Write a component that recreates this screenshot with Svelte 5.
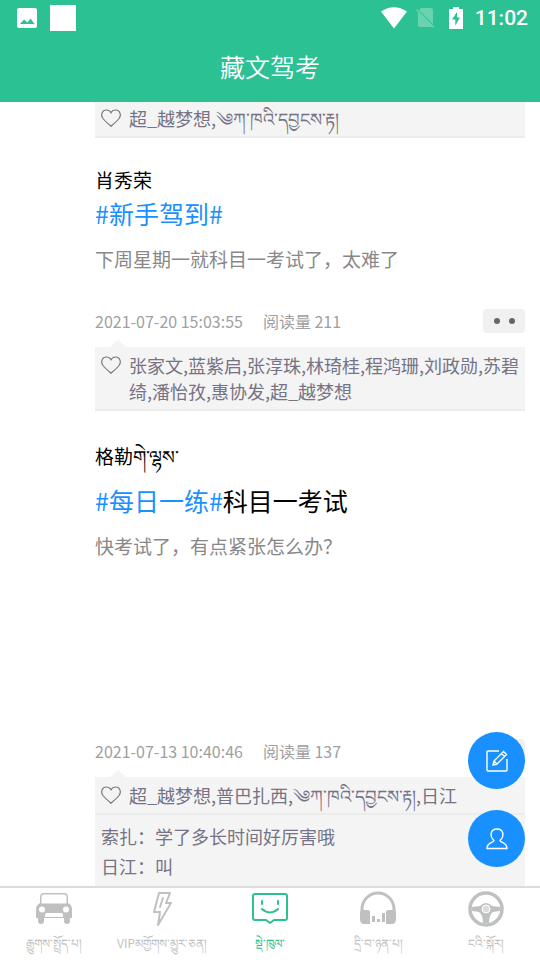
<script>
  const posts = [
    {
      name: '肖秀荣',
      tag: '#新手驾到#',
      title: '',
      body: '下周星期一就科目一考试了，太难了',
      time: '2021-07-20 15:03:55',
      reads: 211,
      likes: '张家文,蓝紫启,张淳珠,林琦桂,程鸿珊,刘政勋,苏碧绮,潘怡孜,惠协发,超_越梦想',
      comments: []
    },
    {
      name: '格勒གེ་ལྷས་',
      tag: '#每日一练#',
      title: '科目一考试',
      body: '快考试了，有点紧张怎么办？',
      media: true,
      time: '2021-07-13 10:40:46',
      reads: 137,
      likes: '超_越梦想,普巴扎西,༄ཀ་ཁའི་དབྱངས་རྟ།,日江',
      comments: ['索扎：学了多长时间好厉害哦', '日江：叫']
    }
  ];
  const tabs = [
    { icon: 'car', label: 'རྒྱུགས་སྤྲོད་པ།' },
    { icon: 'bolt', label: 'VIPམགྱོགས་མྱུར་ཅན།' },
    { icon: 'chat', label: 'སྡེ་ཁུལ་' },
    { icon: 'phones', label: 'དྲི་བ་ཉན་པ།' },
    { icon: 'wheel', label: 'ངའི་སྐོར།' }
  ];
</script>

{#snippet likeRow(text)}
  <div class="likes">
    <svg class="heart" viewBox="0 0 20 18" aria-hidden="true">
      <path d="M10 17.2C7 14.6 4 12 2 9.500C-.8 5.800 1.300 1 5.300 1C7.600 1 9.200 2.200 10 3.700C10.800 2.200 12.400 1 14.700 1C18.700 1 20.800 5.800 18 9.500C16 12 13 14.600 10 17.200Z" />
    </svg>
    <p>{text}</p>
  </div>
{/snippet}

<div class="app">
  <header>
    <div class="status">
      <svg width="20" height="20" viewBox="0 0 20 20" aria-hidden="true">
        <path fill="#fff" fill-rule="evenodd" d="M2 0H18Q20 0 20 2V18Q20 20 18 20H2Q0 20 0 18V2Q0 0 2 0ZM3 16H17.500L13.500 10.500L10.500 14.500L7 11.500Z" />
      </svg>
      <span class="square"></span>
      <span class="grow"></span>
      <svg width="26" height="22" viewBox="0 0 26 22" aria-hidden="true">
        <path fill="#fff" d="M0 4.500Q13-4 26 4.500L13 21.500Z" />
      </svg>
      <svg class="sim" width="19" height="20" viewBox="0 0 19 20" aria-hidden="true">
        <path fill="#69d3b0" d="M5 0H15Q17 0 17 2V16L3 2ZM2 4L17 19H4Q2 19 2 17Z" />
        <path stroke="#69d3b0" stroke-width="1.500" d="M.5 1.500L18 19.500" />
      </svg>
      <svg width="14" height="22" viewBox="0 0 14 22" aria-hidden="true">
        <path fill="#fff" fill-rule="evenodd" d="M4 0H10V2H14V22H0V2H4ZM8 5L3 12.500H6.300V18.500L11 10.500H8Z" />
      </svg>
      <time>11:02</time>
    </div>
    <h1>藏文驾考</h1>
  </header>

  <main>
    <div class="feed">
      <div class="panel first">{@render likeRow('超_越梦想,༄ཀ་ཁའི་དབྱངས་རྟ།')}</div>
      {#each posts as post}
        <article>
          <h2>{post.name}</h2>
          <h3><a href="#tag">{post.tag}</a>{post.title}</h3>
          <p class="body">{post.body}</p>
          {#if post.media}<div class="media"></div>{/if}
          <div class="meta">
            <span>{post.time}</span>
            <span>阅读量 {post.reads}</span>
            <button class="more" aria-label="更多"><i></i><i></i></button>
          </div>
          <div class="panel arrow">
            {@render likeRow(post.likes)}
            {#if post.comments.length}
              <div class="comments">
                {#each post.comments as comment}<p>{comment}</p>{/each}
              </div>
            {/if}
          </div>
        </article>
      {/each}
    </div>
    <div class="fabs">
      <button aria-label="发布">
        <svg width="22" height="22" viewBox="0 0 22 22" aria-hidden="true">
          <path d="M13 1H2Q1 1 1 2V20Q1 21 2 21H20Q21 21 21 20V9M7 15L8 11L17.500 1.500L20.500 4.500L11 14ZM15.500 3.500L18.500 6.500M8 11L11 14" />
        </svg>
      </button>
      <button aria-label="我的">
        <svg width="22" height="22" viewBox="0 0 22 22" aria-hidden="true">
          <path d="M8 12.500C3.500 8.500 4 1 11 1S18.500 8.500 14 12.500C14 15 21 14 21 20.500H1C1 14 8 15 8 12.500Z" />
        </svg>
      </button>
    </div>
  </main>

  <nav>
    {#each tabs as tab}
      <a href="#{tab.icon}" class:active={tab.icon === 'chat'}>
        <svg width="36" height="36" viewBox="0 0 36 36" aria-hidden="true">
          {#if tab.icon === 'car'}
            <path fill="currentColor" fill-rule="evenodd" d="M8 2H28Q32 2 32 6V12Q36 14 36 18V27H34V30Q34 33 31 33T28 30V27H8V30Q8 33 5 33T2 30V27H0V18Q0 14 4 12V6Q4 2 8 2ZM8 3.500Q5.500 3.500 5.500 6V12.500H30.500V6Q30.500 3.500 28 3.500ZM6 15.500A3 3 0 1 0 6 21.500A3 3 0 1 0 6 15.500ZM30 15.500A3 3 0 1 0 30 21.500A3 3 0 1 0 30 15.500ZM11 22Q9 22 9 24V26H27V24Q27 22 25 22Z" />
          {:else if tab.icon === 'bolt'}
            <path class="line" d="M15 2H26L22 12H27L14 34L16 21H10ZM19 7L16 16" />
          {:else if tab.icon === 'chat'}
            <path class="line" d="M3 3H33Q35 3 35 5V27Q35 29 33 29H22L18 32L14 29H3Q1 29 1 27V5Q1 3 3 3ZM10 10V13M26 10V13M10 18Q18 25 26 18" />
          {:else if tab.icon === 'phones'}
            <path fill="none" stroke="currentColor" stroke-width="3" d="M2 22V18A16 16 0 0 1 34 18V22" />
            <path fill="currentColor" d="M3 19H8Q10 19 10 21V33H4Q0 33 0 28V22Q0 19 3 19ZM28 19H33Q36 19 36 22V28Q36 33 32 33H26V21Q26 19 28 19ZM12 25H15V31H12ZM17 28H20V31H17ZM22 22H25V31H22Z" />
          {:else}
            <circle cx="18" cy="18" r="16" fill="none" stroke="currentColor" stroke-width="3.500" />
            <path fill="currentColor" d="M4 16L12 15Q18 9 24 15L32 16V20L25 21Q21 24 21 32H15Q15 24 11 21L4 20Z" />
            <circle cx="18" cy="18" r="4" fill="#ddd" stroke="#fff" />
          {/if}
        </svg>
        <span>{tab.label}</span>
      </a>
    {/each}
  </nav>
</div>

<style>
  :global(body) {
    margin: 0;
    background: #fff;
  }
  .app {
    display: flex;
    flex-direction: column;
    height: 100vh;
    overflow: hidden;
    font-family: 'Noto Sans CJK SC', 'Noto Sans', sans-serif;
    font-weight: 400;
    color: #000;
  }
  h1, h2, h3, p {
    margin: 0;
    font-weight: inherit;
  }
  button {
    border: 0;
    padding: 0;
  }
  a {
    color: #1890ff;
    text-decoration: none;
  }
  header {
    flex: none;
    background: #2bc192;
    color: #fff;
  }
  .status {
    display: flex;
    align-items: center;
    height: 36px;
    padding: 0 12px 0 17px;
  }
  .square {
    width: 26px;
    height: 26px;
    margin-left: 13px;
    background: #fff;
  }
  .grow {
    flex: 1;
  }
  .sim {
    margin: 0 14px 0 9px;
  }
  time {
    margin-left: 12px;
    font: 500 21px Roboto, sans-serif;
  }
  h1 {
    font-size: 25px;
    font-weight: 350;
    line-height: 60px;
    padding-bottom: 6px;
    text-align: center;
  }
  main {
    position: relative;
    flex: 1;
    min-height: 0;
  }
  .feed {
    height: 100%;
    overflow: hidden;
    padding: 0 15px 0 95px;
    box-sizing: border-box;
  }
  .panel {
    position: relative;
    background: #f4f4f4;
    color: #757385;
    font-size: 18px;
  }
  .likes {
    display: flex;
    gap: 8px;
    padding: 5px 4px 5px 6px;
    line-height: 26px;
    border-bottom: 2px solid #ececec;
  }
  .first .likes {
    padding-top: 3px;
  }
  .likes p {
    flex: 1;
    word-break: break-all;
  }
  .heart {
    flex: none;
    width: 20px;
    height: 18px;
    margin-top: 4px;
    fill: none;
    stroke: #77757f;
    stroke-width: 1.2;
  }
  .arrow::before {
    content: '';
    position: absolute;
    left: 15px;
    top: -7px;
    border: 8px solid transparent;
    border-top: 0;
    border-bottom: 7px solid #f4f4f4;
  }
  .comments {
    padding: 6px;
    line-height: 30px;
  }
  article {
    padding-top: 28px;
  }
  article + article {
    padding-top: 31px;
  }
  h2 {
    font-size: 19px;
    line-height: 28px;
  }
  h3 {
    font-size: 25px;
    line-height: 38px;
  }
  article + article h3 {
    margin-top: 11px;
  }
  .body {
    margin-top: 12px;
    color: #888;
    font-size: 19px;
    line-height: 30px;
  }
  .media {
    height: 143px;
  }
  .meta {
    display: flex;
    align-items: center;
    gap: 20px;
    height: 24px;
    margin: 35px 0 14px;
    color: #a0a0a0;
    font-size: 16px;
  }
  .more {
    display: flex;
    align-items: center;
    justify-content: center;
    gap: 9px;
    width: 42px;
    height: 24px;
    margin-left: auto;
    border-radius: 4px;
    background: #f0f0f0;
  }
  .more i {
    width: 6px;
    height: 6px;
    border-radius: 50%;
    background: #666;
  }
  .fabs {
    position: absolute;
    right: 15px;
    bottom: 19px;
    display: flex;
    flex-direction: column;
    gap: 21px;
  }
  .fabs button {
    display: flex;
    align-items: center;
    justify-content: center;
    width: 57px;
    height: 57px;
    border-radius: 50%;
    background: #1890ff;
  }
  .fabs svg {
    fill: none;
    stroke: #fff;
    stroke-width: 1.4;
  }
  nav {
    display: flex;
    flex: none;
    height: 72px;
    border-top: 2px solid #dcdcdc;
    background: #fff;
  }
  nav a {
    flex: 1 1 0;
    min-width: 0;
    display: flex;
    flex-direction: column;
    align-items: center;
    padding-top: 3px;
    color: #bfc1c1;
    font-size: 12px;
    line-height: 24px;
    white-space: nowrap;
  }
  nav span {
    margin-top: 4px;
  }
  nav .active {
    color: #2bc192;
  }
  .line {
    fill: none;
    stroke: currentColor;
    stroke-width: 2;
    stroke-linejoin: round;
    stroke-linecap: round;
  }
</style>
